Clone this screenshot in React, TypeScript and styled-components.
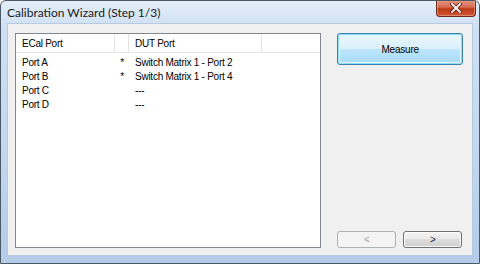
import React from "react"
import styled, { createGlobalStyle } from "styled-components"

const Global = createGlobalStyle`
  html, body { margin: 0; padding: 0; background: #ffffff; }
  body { font-family: "Liberation Sans", Arial, sans-serif; }
`

const Window = styled.div`
  width: 480px;
  height: 264px;
  box-sizing: border-box;
  border: 1px solid #4d5866;
  border-radius: 6px 6px 0 0;
  background: linear-gradient(180deg, #e4eef9 0%, #cfe0f3 10%, #c2d7ee 60%, #b4cce8 100%);
  display: flex;
  flex-direction: column;
  overflow: hidden;
`

const TitleBar = styled.div`
  height: 22px;
  display: flex;
  align-items: flex-start;
  justify-content: space-between;
  padding-left: 6px;
`

const Title = styled.div`
  font-family: Lato, "Liberation Sans", sans-serif;
  font-size: 12px;
  color: #1b1b1b;
  margin-top: 4px;
`

const CloseButton = styled.div`
  width: 40px;
  height: 17px;
  margin-top: -1px;
  margin-right: 3px;
  box-sizing: border-box;
  border: 1px solid #6b2a1c;
  border-top: none;
  border-radius: 0 0 4px 4px;
  background: linear-gradient(180deg, #e59a86 0%, #d56a50 45%, #bd3a18 55%, #cf5735 100%);
  display: flex;
  align-items: center;
  justify-content: center;
  box-shadow: inset 0 0 0 1px rgba(255, 200, 180, 0.45);
`

const Client = styled.div`
  flex: 1;
  margin: 0 6px 7px 6px;
  border: 1px solid #b6cbe2;
  background: #f0f0f0;
  display: flex;
  padding: 9px 9px 7px 7px;
  gap: 16px;
`

const ListBox = styled.div`
  width: 307px;
  box-sizing: border-box;
  border: 1px solid #828790;
  background: #ffffff;
  display: flex;
  flex-direction: column;
  font-size: 10px;
  letter-spacing: -0.25px;
  font-family: "Liberation Sans", Arial, sans-serif;
  color: #000000;
`

const Header = styled.div`
  height: 18px;
  display: flex;
  border-bottom: 1px solid #e5e5e5;
  margin-bottom: 2px;
`

const HeaderCell = styled.div<{ $w: number }>`
  width: ${(p) => p.$w}px;
  box-sizing: border-box;
  border-right: 1px solid #e5e5e5;
  padding-left: 6px;
  display: flex;
  align-items: center;
`

const Row = styled.div`
  height: 14px;
  display: flex;
  align-items: center;
`

const Cell = styled.div<{ $w: number; $center?: boolean }>`
  width: ${(p) => p.$w}px;
  box-sizing: border-box;
  padding-left: ${(p) => (p.$center ? 0 : 6)}px;
  text-align: ${(p) => (p.$center ? "center" : "left")};
  white-space: nowrap;
`

const Side = styled.div`
  width: 126px;
  display: flex;
  flex-direction: column;
  justify-content: space-between;
`

const MeasureButton = styled.div`
  height: 32px;
  box-sizing: border-box;
  border: 1px solid #3c7fb1;
  border-radius: 3px;
  background: linear-gradient(180deg, #eaf6fd 0%, #d9f0fc 49%, #bee6fd 50%, #a7d9f5 100%);
  box-shadow: inset 0 0 0 1px #8fdcf6, inset 0 0 0 2px #e4f6fd;
  display: flex;
  align-items: center;
  justify-content: center;
  font-size: 10px;
  letter-spacing: -0.2px;
  color: #000000;
`

const NavRow = styled.div`
  display: flex;
  gap: 7px;
`

const NavButton = styled.div<{ $disabled?: boolean }>`
  width: 59px;
  height: 17px;
  box-sizing: border-box;
  border: 1px solid ${(p) => (p.$disabled ? "#adb2b5" : "#707070")};
  border-radius: 3px;
  background: ${(p) =>
    p.$disabled
      ? "#f4f4f4"
      : "linear-gradient(180deg, #f2f2f2 0%, #ebebeb 49%, #dddddd 50%, #cfcfcf 100%)"};
  box-shadow: inset 0 0 0 1px ${(p) => (p.$disabled ? "#f4f4f4" : "#fcfcfc")};
  display: flex;
  align-items: center;
  justify-content: center;
  font-size: 10px;
  color: ${(p) => (p.$disabled ? "#a0a0a0" : "#1c2b45")};
`

const cols = [99, 14, 133, 59]

const rows = [
  { port: "Port A", mark: "*", dut: "Switch Matrix 1 - Port 2" },
  { port: "Port B", mark: "*", dut: "Switch Matrix 1 - Port 4" },
  { port: "Port C", mark: "", dut: "---" },
  { port: "Port D", mark: "", dut: "---" },
]

export default function App() {
  return (
    <>
      <Global />
      <Window>
        <TitleBar>
          <Title>Calibration Wizard (Step 1/3)</Title>
          <CloseButton>
            <svg width="12" height="10" viewBox="0 0 12 10">
              <path
                d="M2 1 L10 9 M10 1 L2 9"
                stroke="#5a1a0e"
                strokeWidth="3.4"
                strokeLinecap="square"
              />
              <path
                d="M2 1 L10 9 M10 1 L2 9"
                stroke="#ffffff"
                strokeWidth="1.8"
                strokeLinecap="square"
              />
            </svg>
          </CloseButton>
        </TitleBar>
        <Client>
          <ListBox>
            <Header>
              <HeaderCell $w={cols[0]}>ECal Port</HeaderCell>
              <HeaderCell $w={cols[1]} />
              <HeaderCell $w={cols[2]}>DUT Port</HeaderCell>
            </Header>
            {rows.map((r) => (
              <Row key={r.port}>
                <Cell $w={cols[0]}>{r.port}</Cell>
                <Cell $w={cols[1]} $center>
                  {r.mark}
                </Cell>
                <Cell $w={cols[2]}>{r.dut}</Cell>
              </Row>
            ))}
          </ListBox>
          <Side>
            <MeasureButton>Measure</MeasureButton>
            <NavRow>
              <NavButton $disabled>&lt;</NavButton>
              <NavButton>&gt;</NavButton>
            </NavRow>
          </Side>
        </Client>
      </Window>
    </>
  )
}
